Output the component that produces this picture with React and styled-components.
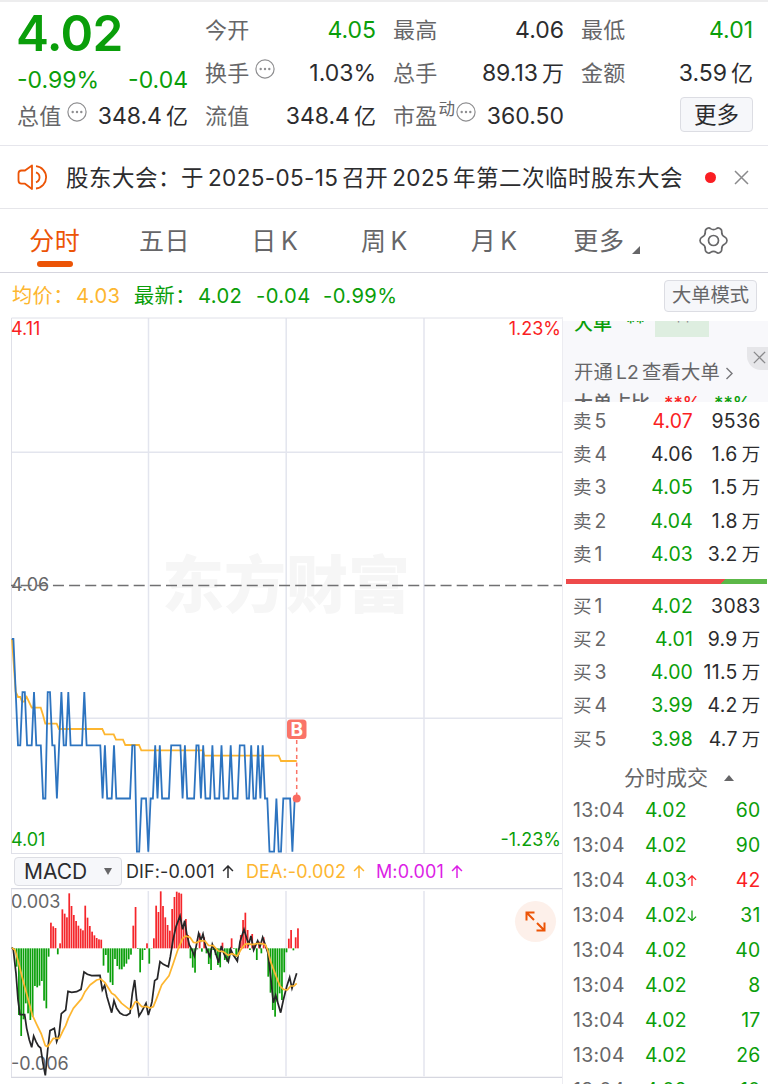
import React from "react";
import styled, { createGlobalStyle } from "styled-components";

const GREEN = "#0a9e0a";
const RED = "#fa1e23";
const DARK = "#2c2c2e";
const GRAY = "#666668";
const ORANGE = "#ec5406";
const YELLOW = "#fdb630";
const PURPLE = "#dc1ee6";

const GlobalStyle = createGlobalStyle`
  * {
    box-sizing: border-box;
  }
  body {
    margin: 0;
    background: #fff;
    font-family: Inter, "Noto Sans CJK SC", sans-serif;
    line-height: 1.2;
    overflow: hidden;
  }
`;

// Layout

const Page = styled.div`
  display: flex;
  flex-direction: column;
  width: 768px;
  height: 1084px;
  overflow: hidden;
  border-top: 2px solid #ededee;
  background: #fff;
  color: ${DARK};
`;

const Quote = styled.header`
  display: grid;
  grid-template-columns: 171px 171px 171px 172px;
  column-gap: 17px;
  height: 144px;
  padding: 7px 0 0 17px;
  border-bottom: 1px solid #e6e6ec;
`;

const QuoteColumn = styled.div`
  display: flex;
  flex-direction: column;
`;

const BigPrice = styled.div`
  height: 49px;
  margin-left: -1px;
  line-height: 49px;
  font-size: 49.5px;
  font-weight: 600;
  letter-spacing: -0.6px;
  color: ${GREEN};
`;

const ChangeRow = styled.div`
  display: flex;
  justify-content: space-between;
  height: 37px;
  line-height: 44px;
  font-size: 23px;
  color: ${GREEN};
`;

const StatRow = styled.div`
  display: flex;
  align-items: center;
  height: 43px;
`;

const StatLabel = styled.span`
  font-size: 22px;
  letter-spacing: 0.3px;
  color: ${GRAY};
  white-space: nowrap;
`;

const StatValue = styled.span`
  margin-left: auto;
  font-size: 23px;
  white-space: nowrap;
  color: ${(props) => props.color || DARK};
`;

const Unit = styled.span`
  margin-left: ${(props) => props.gap || "4px"};
  font-size: ${(props) => props.size || "22px"};
`;

const Sup = styled.span`
  margin: -14px 1px 0 1px;
  font-size: 16.5px;
  color: ${GRAY};
`;

const Hint = styled.svg`
  width: 20px;
  height: 20px;
  margin: -9px 0 0 ${(props) => (props.$tight ? "0" : "5.5px")};
  flex: none;
`;

const MoreButton = styled.button`
  width: 73px;
  height: 35px;
  margin-left: auto;
  margin-top: -4px;
  padding: 0;
  border: 1px solid #dcdde3;
  border-radius: 4px;
  background: #f6f7fa;
  color: ${DARK};
  font: 22.5px/33px Inter, "Noto Sans CJK SC", sans-serif;
`;

const Notice = styled.div`
  display: flex;
  align-items: center;
  height: 63px;
  padding: 0 18px 0 17px;
  border-bottom: 1px solid #e6e6ea;
`;

const NoticeText = styled.div`
  display: flex;
  width: 622px;
  margin-left: 18px;
  font-size: 22.5px;
  letter-spacing: 0.5px;
  white-space: nowrap;
`;

const NoticeDate = styled.span`
  margin: 0 4px;
  letter-spacing: 0.35px;
`;

const Dot = styled.span`
  width: 11px;
  height: 11px;
  margin: 0 18px 0 17px;
  border-radius: 50%;
  background: ${RED};
`;

const Tabs = styled.nav`
  display: flex;
  height: 64px;
  border-bottom: 1px solid #d5d5de;
`;

const Tab = styled.div`
  position: relative;
  display: flex;
  justify-content: center;
  align-items: center;
  width: 110px;
  height: 63px;
  font-size: 25px;
  letter-spacing: 0.6px;
  color: ${(props) => (props.$active ? ORANGE : GRAY)};

  &::after {
    content: "";
    display: ${(props) => (props.$active ? "block" : "none")};
    position: absolute;
    left: 37px;
    bottom: 5px;
    width: 36px;
    height: 6px;
    border-radius: 3px;
    background: ${ORANGE};
  }
`;

const TabLatin = styled.span`
  margin: 0 -1px 0 4px;
`;

const Corner = styled.span`
  align-self: flex-end;
  margin: 0 -6px 18px 7px;
  border-left: 8px solid transparent;
  border-bottom: 8px solid ${GRAY};
`;

const Legend = styled.div`
  display: flex;
  align-items: center;
  height: 44px;
  padding: 2px 11px 0 12px;
  font-size: 20.2px;
  letter-spacing: 0.4px;
  color: ${GREEN};
  white-space: nowrap;
`;

const LegendItem = styled.span`
  width: ${(props) => props.width};
  color: ${(props) => props.color || GREEN};
`;

const ModeButton = styled.button`
  width: 93px;
  height: 32px;
  margin: -1px 0 0 auto;
  padding: 0;
  border: 1px solid #dcdde3;
  border-radius: 4px;
  background: #f6f7fa;
  color: ${GRAY};
  font: 19.3px/29px Inter, "Noto Sans CJK SC", sans-serif;
`;

const Body = styled.main`
  display: flex;
  flex: 1;
  min-height: 0;
`;

const Charts = styled.section`
  width: 562px;
  padding-left: 11px;
`;

const PlotBox = styled.div`
  position: relative;
  height: ${(props) => props.height};
`;

const Plot = styled.svg`
  position: relative;
  display: block;
  width: 551px;
  height: 100%;
`;

const AxisLabel = styled.span`
  position: absolute;
  font-size: 18px;
  line-height: 22px;
  color: ${(props) => props.color || GRAY};
  top: ${(props) => props.top};
  left: ${(props) => props.left};
  right: ${(props) => props.right};
`;

const Watermark = styled.span`
  position: absolute;
  left: 151px;
  top: 223px;
  font-size: 62px;
  line-height: 92px;
  font-weight: 900;
  color: #f6f6f6;
`;

const Expand = styled.div`
  position: absolute;
  right: 6px;
  top: 13px;
  display: flex;
  align-items: center;
  justify-content: center;
  width: 41px;
  height: 41px;
  border-radius: 50%;
  background: #fdf0ea;
`;

const IndicatorBar = styled.div`
  display: flex;
  align-items: center;
  height: 34px;
  padding: 1px 0 0 3px;
  font-size: 18px;
  white-space: nowrap;
`;

const IndicatorSelect = styled.div`
  display: flex;
  align-items: center;
  justify-content: space-between;
  width: 108px;
  height: 29px;
  margin-right: 4px;
  padding: 0 9px 0 9px;
  border: 1px solid #dcdde3;
  border-radius: 4px;
  background: #f6f7fa;
  font-size: 21px;
`;

const Caret = styled.span`
  border: 4.5px solid transparent;
  border-top: 7px solid ${GRAY};
  border-bottom: 0;
`;

const Indicator = styled.span`
  display: flex;
  align-items: center;
  width: ${(props) => props.width};
  color: ${(props) => props.color};
  letter-spacing: 0.1px;

  svg {
    margin-left: 7px;
  }
`;

const Side = styled.aside`
  width: 206px;
  border-left: 1px solid #ececf1;
`;

const BigOrders = styled.div`
  position: relative;
  height: 81px;
  margin: 4px 0 3px;
  padding-left: 11px;
  overflow: hidden;
  background: #f8f8fb;
  white-space: nowrap;
`;

const ClippedRow = styled.div`
  display: flex;
  height: 18px;
  margin-top: ${(props) => props.offset};
  font-size: 19px;
  line-height: 18px;
  font-weight: 500;
  color: ${(props) => props.color};
`;

const Mark = styled.span`
  width: ${(props) => props.width};
  margin-left: ${(props) => props.left || 0};
  color: ${(props) => props.color};
  font-size: 18px;
`;

const Highlight = styled.span`
  width: 54px;
  height: 29px;
  margin: -7px 0 0 14px;
  padding: 6px 0 0 19px;
  background: #deeee0;
  color: #8a8a8e;
  font-size: 18px;
  font-weight: 400;
`;

const UnlockRow = styled.div`
  display: flex;
  align-items: center;
  height: 28px;
  margin-top: 26px;
  font-size: 19.3px;
  letter-spacing: 0.2px;
  color: ${GRAY};

  span {
    margin: 0 3px;
  }
  svg {
    margin-left: 5px;
  }
`;

const CloseCorner = styled.div`
  position: absolute;
  right: 0;
  top: 26px;
  display: flex;
  align-items: center;
  justify-content: center;
  width: 21px;
  height: 23px;
  padding: 0 0 2px 4px;
  border-bottom-left-radius: 14px;
  background: #e6e6e9;
`;

const Level = styled.div`
  display: flex;
  align-items: center;
  height: 33.25px;
  padding: 0 7.5px 0 10px;
  font-size: 19.4px;
  white-space: nowrap;
`;

const LevelName = styled.span`
  width: 60px;
  font-size: 18.5px;
  color: ${GRAY};
`;

const LevelPrice = styled.span`
  width: 60px;
  text-align: right;
  letter-spacing: 0.2px;
  color: ${(props) => props.color};
`;

const LevelVolume = styled.span`
  margin-left: auto;
  letter-spacing: 0.3px;
`;

const Ratio = styled.div`
  height: 5px;
  margin: 7.5px 1px 6px 3px;
  background: linear-gradient(135deg, #ee4a4b 0 77.2%, #5cb848 77.2%);
`;

const TradesTitle = styled.div`
  display: flex;
  align-items: center;
  height: 37px;
  padding: 7px 0 0 61px;
  font-size: 21px;
  color: ${GRAY};

  &::after {
    content: "";
    margin-left: 16px;
    border: 5.5px solid transparent;
    border-top: 0;
    border-bottom: 6px solid ${GRAY};
  }
`;

const Trade = styled.div`
  display: flex;
  align-items: center;
  height: 35.05px;
  padding: 0 7.5px 0 10px;
  font-size: 19.4px;
  letter-spacing: 0.2px;
  color: ${GREEN};
`;

const TradeTime = styled.span`
  width: 72px;
  letter-spacing: 0.3px;
  color: ${GRAY};
`;

const TradeVolume = styled.span`
  margin-left: auto;
  color: ${(props) => props.color};
`;

// Data

// [price, minutes] runs of the intraday line
const PRICE_RUNS = [
  [4.05, 1], [4.04, 1], [4.03, 2], [4.04, 2], [4.03, 3], [4.04, 1], [4.03, 3],
  [4.02, 2], [4.04, 2], [4.03, 2], [4.02, 1], [4.03, 1], [4.04, 1], [4.03, 2],
  [4.04, 1], [4.03, 6], [4.04, 1], [4.03, 7], [4.02, 1], [4.03, 1], [4.02, 3],
  [4.03, 1], [4.02, 7], [4.03, 2], [4.01, 2], [4.02, 3], [4.01, 1], [4.02, 2],
  [4.03, 1], [4.02, 1], [4.03, 1], [4.02, 4], [4.03, 5], [4.02, 1], [4.03, 1],
  [4.02, 4], [4.03, 2], [4.02, 1], [4.03, 1], [4.02, 3], [4.03, 1], [4.02, 3],
  [4.03, 1], [4.02, 3], [4.03, 1], [4.02, 3], [4.03, 3], [4.02, 2], [4.03, 1],
  [4.02, 2], [4.03, 1], [4.02, 1], [4.03, 1], [4.02, 2], [4.01, 3], [4.02, 1],
  [4.01, 2], [4.02, 4], [4.01, 1], [4.02, 2],
];

const AVERAGE =
  "12,639 15.7,692 18,697 20.3,697 22,701.7 24,701.7 26.7,697 31.7,707.7 40.7,707.7 43,715 45.3,723.7 56.7,723.7 59,729 102.3,729 104.7,734.3 113.7,734.3 116,739.7 123,739.7 125.3,745 139,745 141.3,750.3 203,750.3 204.3,755.7 278.7,755.7 281,761 296.7,761";

// histogram tips, one per minute, zero axis is at 295
const MACD_BARS = [
  298, 350, 495, 558, 508, 460, 490, 510, 500, 408, 412, 407, 393, 452, 475,
  320, 218, 229, 234, 313, 280, 178, 191, 202, 130, 168, 195, 213, 227, 236,
  241, 167, 203, 228, 245, 256, 264, 268, 269, 347, 315, 368, 397, 405, 327,
  348, 358, 358, 350, 341, 328, 314, 227, 171, 297, 367, 330, 300, 280, 341,
  296, 265, 167, 186, 124, 168, 202, 225, 242, 177, 141, 125, 128, 131, 225,
  207, 255, 325, 353, 368, 298, 250, 305, 262, 310, 342, 360, 300, 315, 345,
  352, 278, 330, 335, 325, 265, 297, 320, 315, 255, 210, 188, 240, 300, 252,
  285, 330, 275, 310, 262, 290, 380, 428, 480, 500, 455, 430, 450, 367, 307,
  266, 240, 301, 262, 235,
];

const DIF =
  "36,292 40,300 48,370 54,450 60,494 74,494 80,535 88,570 95,592 101,558 108,575 115,588 122,594 129,640 136,676 143,600 150,542 163,535 170,575 177,555 184,491 197,480 204,424 215,427 230,425 243,418 252,366 262,373 275,377 300,376 307,420 314,406 321,440 335,488 342,452 350,475 360,489 370,495 380,496 390,490 397,430 404,390 410,450 417,498 425,485 438,460 445,495 451,475 456,455 464,392 472,386 480,335 490,343 505,350 511,320 519,270 528,230 540,198 548,238 554,212 560,250 568,285 576,300 583,318 596,250 603,270 609,252 617,290 630,320 637,283 644,300 656,338 664,288 672,312 685,335 692,298 700,315 712,333 720,275 732,238 740,265 746,283 753,258 761,300 773,272 780,290 788,262 796,285 804,310 812,380 820,458 827,436 842,488 850,450 860,410 869,382 876,415 890,370";

const DEA =
  "36,294 45,300 55,335 70,395 85,450 97,495 110,523 124,552 136,587 143,590 160,565 178,565 190,540 197,527 205,505 220,475 245,446 255,425 270,405 290,390 302,387 315,398 335,430 345,436 365,460 388,478 395,475 406,455 413,456 425,470 440,470 450,474 460,470 470,445 485,405 495,392 507,377 520,340 535,295 548,265 557,258 570,262 580,277 590,278 600,272 615,273 625,286 640,287 655,303 670,305 685,316 695,311 712,318 722,300 735,283 745,281 755,284 770,281 785,281 796,284 803,300 812,335 825,370 840,408 850,418 862,420 872,408 882,408 890,400";

const SELLS = [
  ["5", "4.07", RED, "9536"],
  ["4", "4.06", DARK, "1.6", "万"],
  ["3", "4.05", GREEN, "1.5", "万"],
  ["2", "4.04", GREEN, "1.8", "万"],
  ["1", "4.03", GREEN, "3.2", "万"],
];

const BUYS = [
  ["1", "4.02", GREEN, "3083"],
  ["2", "4.01", GREEN, "9.9", "万"],
  ["3", "4.00", GREEN, "11.5", "万"],
  ["4", "3.99", GREEN, "4.2", "万"],
  ["5", "3.98", GREEN, "4.7", "万"],
];

const TRADES = [
  ["4.02", "60"],
  ["4.02", "90"],
  ["4.03", "42", "up"],
  ["4.02", "31", "down"],
  ["4.02", "40"],
  ["4.02", "8"],
  ["4.02", "17"],
  ["4.02", "26"],
  ["4.02", "10"],
];

const pricePoints = () => {
  const points = ["11.8,639"];
  let minute = 0;
  PRICE_RUNS.forEach(([price, count]) => {
    for (let i = 0; i < count; i++) {
      const x = 13.4 + minute * 2.287;
      const y = 639 + (4.05 - price) * 5315;
      points.push(`${x.toFixed(1)},${y.toFixed(1)}`);
      minute++;
    }
  });
  return points.join(" ");
};

// Icons

const HintIcon = ({ tight }) => (
  <Hint viewBox="0 0 20 20" $tight={tight}>
    <circle cx="10" cy="10" r="9.1" fill="none" stroke="#8e8e90" strokeWidth="1.2" />
    <circle cx="5.7" cy="10" r="1.2" fill="#8e8e90" />
    <circle cx="10" cy="10" r="1.2" fill="#8e8e90" />
    <circle cx="14.3" cy="10" r="1.2" fill="#8e8e90" />
  </Hint>
);

const SpeakerIcon = () => (
  <svg width="31" height="27" viewBox="0 0 31 27" fill="none" stroke={ORANGE} strokeWidth="1.8" strokeLinejoin="round">
    <path d="M15 1.5 8 6.5H4.5Q1.5 6.5 1.5 9.5v7Q1.5 19.7 4.500 19.7H8l7 5.3z" />
    <path d="M19 8.3a5.3 5.3 0 0 1 0 10M19 2.2a11.2 11.2 0 0 1 0 22.3" />
  </svg>
);

const CloseIcon = ({ size = 15 }) => (
  <svg width={size} height={size} viewBox="0 0 15 15" stroke="#8a8a8c" strokeWidth="1.5">
    <path d="M1 1l13 13M14 1L1 14" />
  </svg>
);

const GearIcon = () => (
  <svg width="29" height="27" viewBox="0 0 29 27" fill="none" stroke={GRAY} strokeWidth="1.7" strokeLinejoin="round">
    <path d="M8.500 1.300Q10.200 .5 11.500 1.600Q14.500 3.600 17.500 1.600Q18.800 .5 20.500 1.300L21.600 2Q23 3 22.700 4.800Q22.600 8.600 25.800 10Q27.900 11 28 13.500Q27.900 16 25.800 17Q22.600 18.400 22.700 22.200Q23 24 21.600 25L20.500 25.700Q18.800 26.500 17.500 25.400Q14.500 23.400 11.500 25.400Q10.200 26.500 8.500 25.700L7.400 25Q6 24 6.300 22.200Q6.400 18.400 3.200 17Q1.100 16 1 13.500Q1.100 11 3.200 10Q6.400 8.600 6.300 4.800Q6 3 7.400 2Z" />
    <circle cx="14.5" cy="13.5" r="5" />
  </svg>
);

const Arrow = ({ down, color = "currentColor", size = 12 }) => (
  <svg width={size} height={size * 1.15} viewBox="0 0 12 14" fill="none" stroke={color} strokeWidth="1.5">
    <path d={down ? "M6 .5v12.500M1 8l5 5 5-5" : "M6 13.500V1M1 6l5-5 5 5"} />
  </svg>
);

const ExpandIcon = () => (
  <svg width="21" height="21" viewBox="0 0 21 21" fill="none" stroke={ORANGE} strokeWidth="2">
    <path d="M9.500 1.500H1.500V9.500M2 2l7 7M11.500 19.500h8v-8M19 19l-7-7" />
  </svg>
);

// Sections

const Stat = ({ label, value, unit, color, hint, sup }) => (
  <StatRow>
    <StatLabel>{label}</StatLabel>
    {sup && <Sup>{sup}</Sup>}
    {hint && <HintIcon tight={Boolean(sup)} />}
    <StatValue color={color}>
      {value}
      {unit && <Unit>{unit}</Unit>}
    </StatValue>
  </StatRow>
);

const LevelRow = ({ side, row: [n, price, color, volume, unit] }) => (
  <Level>
    <LevelName>
      {side}
      <Unit gap="3px" size="19.4px">{n}</Unit>
    </LevelName>
    <LevelPrice color={color}>{price}</LevelPrice>
    <LevelVolume>
      {volume}
      {unit && <Unit size="18.5px">{unit}</Unit>}
    </LevelVolume>
  </Level>
);

const PriceChart = () => (
  <PlotBox height="537px">
    <Watermark>东方财富</Watermark>
    <AxisLabel top="257px" left="0">4.06</AxisLabel>
    <Plot viewBox="11 317 551 537">
      <g stroke="#e3e5ee" strokeWidth="1.5">
        <path d="M148.500 318V853M286.200 318V853M424 318V853M11 452.300H562M11 718.300H562" />
      </g>
      <path d="M11.500 854V318H562M11 853.500H562" fill="none" stroke="#dfe0e8" />
      <path d="M11 585.500H562" stroke="#707072" strokeWidth="1.3" strokeDasharray="11 5.150" strokeDashoffset="6.500" />
      <polyline points={AVERAGE} fill="none" stroke={YELLOW} strokeWidth="1.8" />
      <polyline points={pricePoints()} fill="none" stroke="#2d74c0" strokeWidth="1.8" />
      <path d="M296.700 740V798" stroke="#fa7468" strokeWidth="1.500" strokeDasharray="4 3.500" />
      <circle cx="296.700" cy="798.500" r="4" fill="#fa6b60" />
      <rect x="287" y="719.500" width="19.500" height="19.500" rx="3.500" fill="#fa7468" />
      <text x="296.700" y="736" textAnchor="middle" fontSize="19" fontWeight="700" fill="#fff">B</text>
    </Plot>
    <AxisLabel top="1px" left="0" color={RED}>4.11</AxisLabel>
    <AxisLabel top="1px" right="1px" color={RED}>1.23%</AxisLabel>
    <AxisLabel top="512px" left="0" color={GREEN}>4.01</AxisLabel>
    <AxisLabel top="512px" right="1px" color={GREEN}>-1.23%</AxisLabel>
  </PlotBox>
);

const MacdChart = () => (
  <PlotBox height="190px">
    <AxisLabel top="3px" left="0">0.003</AxisLabel>
    <AxisLabel top="165px" left="0">-0.006</AxisLabel>
    <Plot viewBox="33 114 1653 570">
      <path d="M445 123V679M858 123V679M1272 123V679" stroke="#e3e5ee" strokeWidth="4.500" />
      <path d="M33 116H1686M33 682H1686" stroke="#d6d7e0" strokeWidth="3.500" />
      <path d="M34.500 116V682" stroke="#dfe0e8" strokeWidth="3" />
      {MACD_BARS.map((tip, i) => (
        <rect
          key={i}
          x={43 + i * 6.862 - 2.6}
          y={Math.min(tip, 295)}
          width="5.200"
          height={Math.abs(tip - 295)}
          fill={tip < 295 ? "#f5262b" : "#0ba00b"}
        />
      ))}
      <polyline points={DIF} fill="none" stroke="#262628" strokeWidth="5.200" />
      <polyline points={DEA} fill="none" stroke={YELLOW} strokeWidth="5.200" strokeLinejoin="round" />
    </Plot>
    <Expand>
      <ExpandIcon />
    </Expand>
  </PlotBox>
);

const App = () => {
  return (
    <>
      <GlobalStyle />
      <Page>
        <Quote>
          <QuoteColumn>
            <BigPrice>4.02</BigPrice>
            <ChangeRow>
              <span>-0.99%</span>
              <span>-0.04</span>
            </ChangeRow>
            <Stat label="总值" value="348.4" unit="亿" hint />
          </QuoteColumn>
          <QuoteColumn>
            <Stat label="今开" value="4.05" color={GREEN} />
            <Stat label="换手" value="1.03%" hint />
            <Stat label="流值" value="348.4" unit="亿" />
          </QuoteColumn>
          <QuoteColumn>
            <Stat label="最高" value="4.06" />
            <Stat label="总手" value="89.13" unit="万" />
            <Stat label="市盈" value="360.50" sup="动" hint />
          </QuoteColumn>
          <QuoteColumn>
            <Stat label="最低" value="4.01" color={GREEN} />
            <Stat label="金额" value="3.59" unit="亿" />
            <StatRow>
              <MoreButton>更多</MoreButton>
            </StatRow>
          </QuoteColumn>
        </Quote>

        <Notice>
          <SpeakerIcon />
          <NoticeText>
            股东大会：<span>于</span>
            <NoticeDate>2025-05-15</NoticeDate>
            召开
            <NoticeDate>2025</NoticeDate>
            年第二次临时股东大会
          </NoticeText>
          <Dot />
          <CloseIcon />
        </Notice>

        <Tabs>
          <Tab $active>分时</Tab>
          <Tab>五日</Tab>
          <Tab>日<TabLatin>K</TabLatin></Tab>
          <Tab>周<TabLatin>K</TabLatin></Tab>
          <Tab>月<TabLatin>K</TabLatin></Tab>
          <Tab>更多<Corner /></Tab>
          <Tab><GearIcon /></Tab>
        </Tabs>

        <Legend>
          <LegendItem width="64px" color={YELLOW}>均价：</LegendItem>
          <LegendItem width="58px" color={YELLOW}>4.03</LegendItem>
          <LegendItem width="64px">最新：</LegendItem>
          <LegendItem width="58px">4.02</LegendItem>
          <LegendItem width="67px">-0.04</LegendItem>
          <LegendItem>-0.99%</LegendItem>
          <ModeButton>大单模式</ModeButton>
        </Legend>

        <Body>
          <Charts>
            <PriceChart />
            <IndicatorBar>
              <IndicatorSelect>
                MACD
                <Caret />
              </IndicatorSelect>
              <Indicator width="120px" color={DARK}>DIF:-0.001<Arrow /></Indicator>
              <Indicator width="130px" color={YELLOW}>DEA:-0.002<Arrow /></Indicator>
              <Indicator color={PURPLE}>M:0.001<Arrow /></Indicator>
            </IndicatorBar>
            <MacdChart />
          </Charts>

          <Side>
            <BigOrders>
              <ClippedRow offset="-6px" color={GREEN}>
                大单
                <Mark left="14px" width="15px" color={GREEN}>**</Mark>
                <Highlight>**</Highlight>
              </ClippedRow>
              <UnlockRow>
                开通<span>L2</span>查看大单
                <svg width="9" height="13" viewBox="0 0 9 13" fill="none" stroke="#77777a" strokeWidth="1.4">
                  <path d="M1.500 1l5.500 5.500L1.500 12" />
                </svg>
              </UnlockRow>
              <ClippedRow offset="8px" color={GRAY}>
                大单占比
                <Mark left="14px" width="50px" color={RED}>**%</Mark>
                <Mark color={GREEN}>**%</Mark>
              </ClippedRow>
              <CloseCorner>
                <CloseIcon size={13} />
              </CloseCorner>
            </BigOrders>
            <div>
              {SELLS.map((row) => (
                <LevelRow key={row[0]} side="卖" row={row} />
              ))}
            </div>
            <Ratio />
            <div>
              {BUYS.map((row) => (
                <LevelRow key={row[0]} side="买" row={row} />
              ))}
            </div>
            <TradesTitle>分时成交</TradesTitle>
            {TRADES.map(([price, volume, dir], i) => (
              <Trade key={i}>
                <TradeTime>13:04</TradeTime>
                <span>{price}</span>
                {dir && <Arrow down={dir === "down"} color={dir === "up" ? RED : GREEN} size={10} />}
                <TradeVolume color={dir === "up" ? RED : GREEN}>{volume}</TradeVolume>
              </Trade>
            ))}
          </Side>
        </Body>
      </Page>
    </>
  );
};

export default App;
